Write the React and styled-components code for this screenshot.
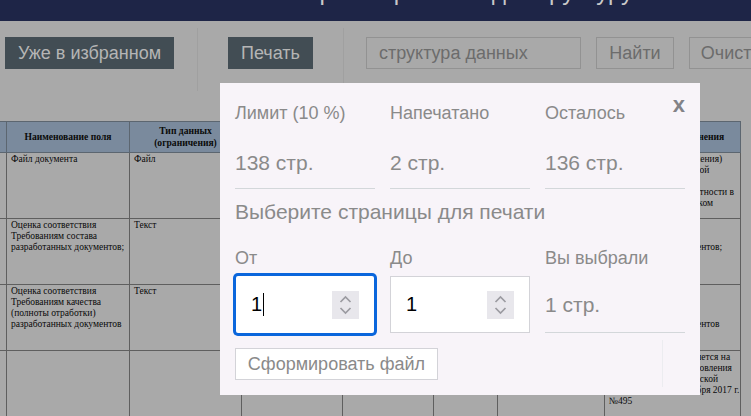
import React from "react"
import styled, {createGlobalStyle} from 'styled-components'

const GlobalStyle = createGlobalStyle`
    html, body {
        margin: 0;
        height: 100%;
        overflow: hidden;
        background: #a9a9a9;
        font-family: "Liberation Sans", Arial, sans-serif;
    }
`
const Page = styled.div`
    width: 751px;
    height: 416px;
    overflow: hidden;
    position: relative;
    background: #a9a9a9;
`
const Header = styled.div`
    height: 21px;
    background: #1e2547;
    color: #c9c9c9;
    font-size: 24px;
    line-height: 24px;
    overflow: hidden;
`
const Title = styled.div`
    margin-top: -20px;
    padding-left: 275px;
    white-space: nowrap;
`
const Toolbar = styled.div`
    height: 100px;
    display: flex;
    align-items: flex-start;
    padding: 7px 0 0 5px;
    box-sizing: border-box;
    width: 800px;
`
const Section = styled.div`
    height: 63px;
    box-sizing: border-box;
    display: flex;
    align-items: flex-start;
    gap: ${({gap}) => gap || 0}px;
    padding: 9px ${({right}) => right || 0}px 0 ${({left}) => left || 0}px;
    border-right: ${({line}) => line ? '1px solid #a0a0a0' : 'none'};
    flex: none;
`
const DarkButton = styled.div`
    width: ${({w}) => w}px;
    height: 32px;
    line-height: 32px;
    text-align: center;
    white-space: nowrap;
    background: #424d54;
    color: #b5b5b5;
    font-size: 18px;
`
const SearchInput = styled.div`
    width: 213px;
    height: 30px;
    line-height: 30px;
    box-sizing: content-box;
    text-indent: 12px;
    border: 1px solid #929292;
    color: #6c6c6c;
    font-size: 18px;
    white-space: nowrap;
`
const OutlineButton = styled.div`
    width: ${({w}) => w}px;
    height: 30px;
    line-height: 30px;
    text-align: center;
    border: 1px solid #929292;
    color: #6c6c6c;
    font-size: 18px;
`
const Table = styled.table`
    margin-left: -51px;
    width: 791px;
    border-collapse: collapse;
    table-layout: fixed;
    font-family: "Liberation Serif", "Times New Roman", serif;
    font-size: 9.5px;
    line-height: 11px;
    color: #0a0a0a;
`
const Th = styled.th`
    height: 30px;
    padding: 0 2px;
    background: #7a8a9d;
    border: 1px solid #5c6670;
    font-size: 9.6px;
    font-weight: bold;
    text-align: center;
    line-height: 12px;
    white-space: ${({nowrap}) => nowrap ? 'nowrap' : 'normal'};
`
const Td = styled.td`
    height: 63px;
    padding: 1px 4px;
    vertical-align: top;
    border: 1px solid #5f5f5f;
    overflow: hidden;
    white-space: ${({nowrap}) => nowrap ? 'nowrap' : 'normal'};
`
const Modal = styled.div`
    position: absolute;
    left: 220px;
    top: 83px;
    width: 480px;
    height: 312px;
    background: #f8f4f9;
    box-sizing: border-box;
    padding: 18px 15px 0;
    color: #8a8a8a;
`
const Close = styled.div`
    position: absolute;
    top: 9px;
    right: 15px;
    font-size: 22px;
    font-weight: bold;
    line-height: 26px;
    color: #828287;
`
const Grid = styled.div`
    display: grid;
    grid-template-columns: repeat(3, 140px);
    column-gap: 15px;
`
const Label = styled.div`
    font-size: 18px;
    line-height: 24px;
`
const Value = styled.div`
    font-size: 21px;
    line-height: 24px;
    height: 64px;
    padding-top: 26px;
    box-sizing: border-box;
    border-bottom: 1px solid #d3d7da;
`
const Heading = styled.div`
    font-size: 21px;
    line-height: 24px;
    margin: 11px 0 22px;
    white-space: nowrap;
`
const NumberBox = styled.div`
    height: 57px;
    background: #fff;
    box-sizing: border-box;
    margin-top: 6px;
    display: flex;
    align-items: center;
    justify-content: space-between;
    padding: 0 15px;
    color: #000;
    font-size: 20px;
    ${({focused}) => focused ? `
        margin-left: 1px;
        margin-right: 1px;
        box-shadow: 0 0 0 3px #0a66dc;
        border-radius: 2px;
    ` : `
        border: 1px solid #d3d3d8;
    `}
`
const Caret = styled.span`
    display: inline-block;
    width: 1px;
    height: 23px;
    margin-left: 1px;
    background: #000;
    vertical-align: -5px;
`
const Spinner = styled.div`
    width: 27px;
    height: 28px;
    background: #e8e7ec;
    display: flex;
    align-items: center;
    justify-content: center;
`
const Selected = styled(Value)`
    height: 63px;
    padding-top: 23px;
`
const Footer = styled.div`
    display: flex;
    align-items: flex-start;
    justify-content: space-between;
    margin-top: 7px;
    height: 47px;
    padding-right: 22px;
`
const SubmitButton = styled.div`
    margin-top: 8px;
    width: 201px;
    height: 30px;
    line-height: 30px;
    text-align: center;
    background: #fff;
    border: 1px solid #d3d3d8;
    font-size: 18px;
    white-space: nowrap;
`
const Divider = styled.div`
    width: 1px;
    height: 47px;
    background: #ececf0;
`

const SpinIcon = () => (
    <Spinner>
        <svg width="13" height="24" viewBox="0 0 13 24" fill="none" stroke="#9b9ba1" strokeWidth="1.7">
            <path d="M1.5 9 L6.5 4 L11.5 9" />
            <path d="M1.5 15 L6.5 20 L11.5 15" />
        </svg>
    </Spinner>
)

const quality = 'Оценка соответствия Требованиям качества (полноты отработки) разработанных документов'
const content = 'Оценка соответствия Требованиям состава разработанных документов;'

const rows = [
    {name: 'Файл документа', type: 'Файл', note: <>Требования поля (значения)<br/>с подписью электронной<br/><br/>оценка полноты целостности в<br/>установленным порядком</>},
    {name: content, type: 'Текст', note: content},
    {name: quality, type: 'Текст', note: quality},
    {name: '', type: '', note: <>Значение поля заполняется на<br/>при основании постановления<br/>Правительства Российской<br/>Федерации от 1 сентября 2017 г.<br/>№495</>, fixed: true},
]

const App = () => (
    <Page>
        <GlobalStyle />
        <Header><Title>Сборка мер в этом до структуру</Title></Header>
        <Toolbar>
            <Section line right={23}><DarkButton w={169}>Уже в избранном</DarkButton></Section>
            <Section line left={30} right={30}><DarkButton w={85}>Печать</DarkButton></Section>
            <Section left={22} gap={15}>
                <SearchInput>структура данных</SearchInput>
                <OutlineButton w={76}>Найти</OutlineButton>
                <OutlineButton w={100}>Очистить</OutlineButton>
            </Section>
        </Toolbar>
        <Table>
            <colgroup>
                <col style={{width: 57}} />
                <col style={{width: 123}} />
                <col style={{width: 112}} />
                <col style={{width: 101}} />
                <col style={{width: 91}} />
                <col style={{width: 64}} />
                <col style={{width: 107}} />
                <col style={{width: 136}} />
            </colgroup>
            <thead>
                <tr>
                    <Th></Th>
                    <Th>Наименование поля</Th>
                    <Th>Тип данных (ограничения)</Th>
                    <Th></Th><Th></Th><Th></Th><Th></Th>
                    <Th nowrap>Требования заполнения</Th>
                </tr>
            </thead>
            <tbody>
                {rows.map((r, i) => (
                    <tr key={i}>
                        <Td></Td>
                        <Td>{r.name}</Td>
                        <Td>{r.type}</Td>
                        <Td></Td><Td></Td><Td></Td><Td></Td>
                        <Td nowrap={i === 0 || r.fixed}>{r.note}</Td>
                    </tr>
                ))}
            </tbody>
        </Table>
        <Modal>
            <Close>x</Close>
            <Grid>
                <Label>Лимит (10 %)</Label>
                <Label>Напечатано</Label>
                <Label>Осталось</Label>
                <Value>138 стр.</Value>
                <Value>2 стр.</Value>
                <Value>136 стр.</Value>
            </Grid>
            <Heading>Выберите страницы для печати</Heading>
            <Grid>
                <Label>От</Label>
                <Label>До</Label>
                <Label>Вы выбрали</Label>
                <NumberBox focused><span>1<Caret /></span><SpinIcon /></NumberBox>
                <NumberBox><span>1</span><SpinIcon /></NumberBox>
                <Selected>1 стр.</Selected>
            </Grid>
            <Footer>
                <SubmitButton>Сформировать файл</SubmitButton>
                <Divider />
            </Footer>
        </Modal>
    </Page>
)

export default App
